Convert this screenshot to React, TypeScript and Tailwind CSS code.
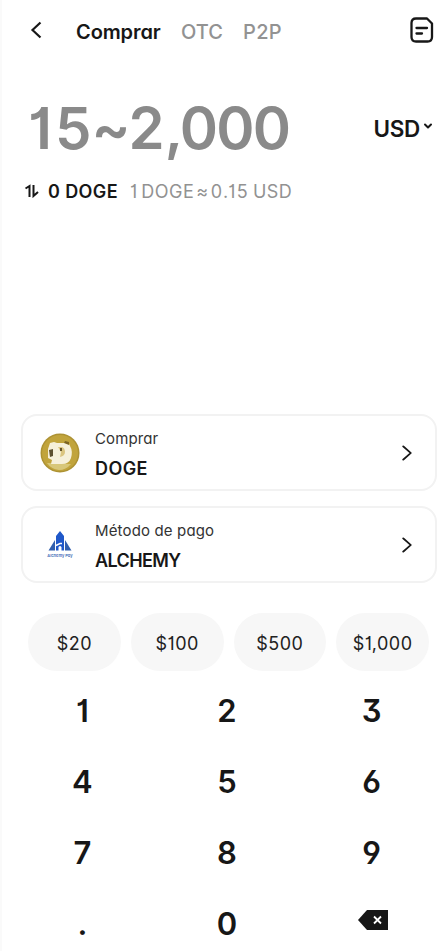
import { ChevronDown, ChevronRight } from "lucide-react";
import type { ReactNode } from "react";

interface OptionCardProps {
  icon: ReactNode;
  label: string;
  value: string;
  labelClass: string;
  valueClass: string;
}

const amounts = ["$20", "$100", "$500", "$1,000"];
const digits = ["1", "2", "3", "4", "5", "6", "7", "8", "9", ".", "0"];

function DogeIcon() {
  return (
    <svg width="40" height="40" viewBox="0 0 40 40">
      <circle cx="20" cy="20" r="19.5" fill="#ad9233" />
      <circle cx="20" cy="20" r="18" fill="#c1a43c" />
      <path d="M7 30 L31 31 Q26 37 19 37 Q11 36 7 30Z" fill="#d8c779" />
      <path
        d="M10 10 L14 9 L17 10 H25 L28 9 L30 13 Q33 18 31 25 Q29 31 22 31 H11 L12 27 L8 25 V16Z"
        fill="#f6f0da"
      />
      <path d="M25 8 L29 9 L29 12 L24 10Z" fill="#7c6422" />
      <path d="M9 17 L13 16 L13 23 L10 24Z" fill="#5d5030" />
      <path d="M18 14 H22 Q25 15 25 19 Q25 23 20 24 L21 19Z" fill="#dbc580" />
      <path d="M20 15 H22 V18 H20Z" fill="#66552d" />
    </svg>
  );
}

function AlchemyIcon() {
  return (
    <div className="flex w-10 flex-col items-center">
      <svg width="24" height="20" viewBox="0 0 24 20">
        <path
          d="M12 0 L16 5 V19.5 H13.5 V16 Q12 14 10.5 16 V19.5 H8 V5Z"
          fill="#1f58c9"
        />
        <path d="M7 9 V19.5 H0.5Z" fill="#315fae" />
        <path d="M17 9 V19.5 H23.5Z" fill="#315fae" />
        <path d="M8 14.5 L12 12.5 H14" stroke="#fff" strokeWidth="1.4" fill="none" />
      </svg>
      <span className="mt-[2px] text-[4px] leading-[5px] font-semibold text-[#4169b5]">
        Alchemy Pay
      </span>
    </div>
  );
}

function OptionCard({
  icon,
  label,
  value,
  labelClass,
  valueClass,
}: OptionCardProps) {
  return (
    <button className="flex h-[77px] w-full items-center rounded-2xl border-2 border-[#f2f2f2] pl-[17px] pr-4 text-left">
      {icon}
      <div className="ml-[15px] flex-1 pt-[3px]">
        <p className={`text-[15px] leading-[20px] text-[#333] ${labelClass}`}>
          {label}
        </p>
        <p
          className={`mt-[10px] text-[18px] leading-[20px] font-semibold ${valueClass}`}
        >
          {value}
        </p>
      </div>
      <ChevronRight className="h-6 w-6 scale-x-125 scale-y-110" strokeWidth={1.6} />
    </button>
  );
}

export default function App() {
  return (
    <div className="h-[951px] w-[444px] overflow-hidden border-l-2 border-[#fafafa] bg-white font-['Inter',sans-serif] text-[#171717] [font-feature-settings:'cv01','cv03','cv04','cv09','cv11']">
      {/* Header */}
      <header className="flex h-[64px] items-center pr-[10px] pl-[27px] whitespace-nowrap">
        <svg
          className="mb-1"
          width="14"
          height="18"
          viewBox="0 0 14 18"
          fill="none"
          stroke="currentColor"
          strokeWidth="2.2"
        >
          <path d="M11.5 1.5 L3.5 9 L11.5 16.5" />
        </svg>
        <nav className="ml-[33px] flex text-[20px]">
          <span className="w-[105px] font-semibold tracking-[-0.1px]">
            Comprar
          </span>
          <span className="w-[62px] font-medium text-[#929292]">OTC</span>
          <span className="font-medium tracking-[0.3px] text-[#929292]">
            P2P
          </span>
        </nav>
        <svg
          className="mb-1 ml-auto"
          width="24"
          height="26"
          viewBox="0 0 24 26"
          fill="none"
          stroke="currentColor"
          strokeWidth="2.3"
          strokeLinecap="round"
          strokeLinejoin="round"
        >
          <path d="M6 1.5 H17 L22 6.5 V20 Q22 24.5 17.5 24.5 H6 Q1.5 24.5 1.5 20 V6 Q1.5 1.5 6 1.5Z" />
          <path d="M6.5 11 H17 M6.5 16.5 H12" />
        </svg>
      </header>

      {/* Amount */}
      <section className="flex h-[110px] items-center justify-between pr-[10px] pl-[26px] pt-[17px]">
        <div className="text-[58px] leading-[70px] font-semibold whitespace-nowrap text-[#8a8a8a]">
          <span className="tracking-[3px]">15</span>
          <span className="-ml-[3px] tracking-[-2px]">~</span>
          <span>2</span>
          <span className="tracking-[-1.8px]">,000</span>
        </div>
        <button className="flex items-center gap-[2px] pt-[2px] text-[22.5px] font-semibold tracking-[-0.3px]">
          USD
          <ChevronDown className="mb-[6px] h-[12px] w-[12px]" strokeWidth={4} />
        </button>
      </section>
      <div className="flex h-[34px] items-center pl-[23px] text-[18px] whitespace-nowrap">
        <svg
          width="14"
          height="14"
          viewBox="0 0 14 14"
          fill="none"
          stroke="currentColor"
          strokeWidth="2"
        >
          <path d="M0.5 4.5 L4.5 2 V13 M8.5 1 V12 L13 8" />
        </svg>
        <span className="ml-[9px] w-[82px] font-semibold tracking-[0.4px]">
          0 DOGE
        </span>
        <span className="tracking-[0.5px] text-[#929292] [word-spacing:-2px]">
          1 DOGE<span className="px-[2px]">≈</span>
          <span className="tracking-[1.5px]">0.15</span> USD
        </span>
      </div>

      {/* Purchase options */}
      <section className="mt-[206px] flex flex-col gap-[15px] pr-[7px] pl-[19px]">
        <OptionCard
          icon={<DogeIcon />}
          label="Comprar"
          value="DOGE"
          labelClass="tracking-[0.1px]"
          valueClass="tracking-[0.4px]"
        />
        <OptionCard
          icon={<AlchemyIcon />}
          label="Método de pago"
          value="ALCHEMY"
          labelClass="tracking-[0.15px]"
          valueClass="tracking-[-0.6px]"
        />
      </section>

      <div className="mt-[30px] grid grid-cols-4 gap-[10px] pr-[15px] pl-[26px]">
        {amounts.map((amount) => (
          <button
            key={amount}
            className="h-[58px] rounded-full bg-[#f7f7f7] pt-[3px] text-[18px] tracking-[0.5px] text-[#222]"
          >
            {amount}
          </button>
        ))}
      </div>

      {/* Keypad */}
      <div className="mt-[5px] ml-2 grid auto-rows-[71px] grid-cols-3">
        {digits.map((digit) => (
          <button key={digit} className="text-[31px] font-semibold">
            {digit}
          </button>
        ))}
        <button className="flex items-center justify-center" aria-label="Borrar">
          <svg
            className="mb-[9px] ml-[2px]"
            width="30"
            height="20"
            viewBox="0 0 30 20"
          >
            <path d="M0 10 L9 0 H30 V20 H9Z" fill="#171717" />
            <path
              d="M16 6.5 L23 13.5 M23 6.5 L16 13.5"
              stroke="#fff"
              strokeWidth="1.8"
            />
          </svg>
        </button>
      </div>
    </div>
  );
}
